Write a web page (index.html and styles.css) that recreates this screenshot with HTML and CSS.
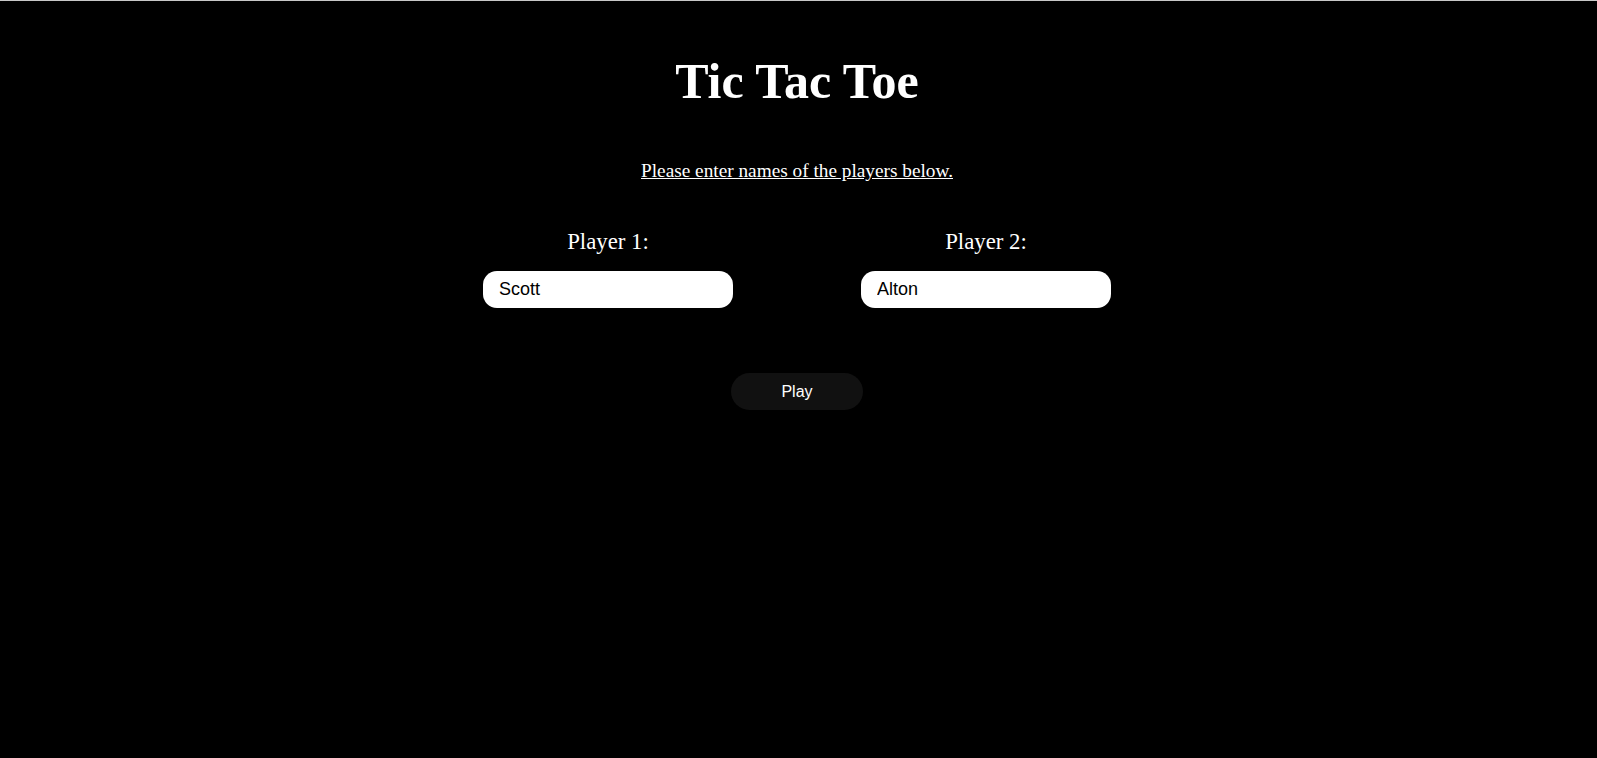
FILE: index.html
```html
<!DOCTYPE html>
<html>
<head>
<meta charset="utf-8">
<title>Tic Tac Toe</title>
<link rel="stylesheet" href="styles.css">
</head>
<body>
<div class="page">
  <h1 class="title">Tic Tac Toe</h1>
  <p class="intro">Please enter names of the players below.</p>
  <div class="players">
    <div class="player">
      <label class="player-label" for="p1">Player 1:</label>
      <input class="player-input" id="p1" type="text" value="Scott">
    </div>
    <div class="player">
      <label class="player-label" for="p2">Player 2:</label>
      <input class="player-input" id="p2" type="text" value="Alton">
    </div>
  </div>
  <div class="actions">
    <button class="play-btn" type="button">Play</button>
  </div>
</div>
</body>
</html>
```
FILE: styles.css
```css
html, body {
  margin: 0;
  padding: 0;
  background: #000;
  height: 100%;
}
body {
  border-top: 1px solid #c8c8c8;
  box-sizing: border-box;
  font-family: "Liberation Serif", "Times New Roman", serif;
  color: #fff;
}
.page {
  display: flex;
  flex-direction: column;
  align-items: center;
  padding-right: 3px;
}
.title {
  margin: 51px 0 0;
  font-size: 50px;
  line-height: 58px;
  font-weight: bold;
}
.intro {
  margin: 50px 0 0;
  font-size: 19.3px;
  line-height: 22px;
  text-decoration: underline;
}
.players {
  display: flex;
  gap: 128px;
  margin-top: 47px;
}
.player {
  width: 250px;
  display: flex;
  flex-direction: column;
  align-items: center;
  gap: 17px;
}
.player-label {
  font-size: 22.8px;
  line-height: 25px;
}
.player-input {
  width: 100%;
  height: 37px;
  box-sizing: border-box;
  border: none;
  border-radius: 14px;
  background: #fff;
  padding: 0 16px;
  font-family: "Liberation Sans", Arial, sans-serif;
  font-size: 18px;
  color: #000;
  outline: none;
}
.actions {
  margin-top: 65px;
}
.play-btn {
  width: 132px;
  height: 37px;
  border: none;
  border-radius: 19px;
  background: #111;
  color: #fff;
  font-family: "Liberation Sans", Arial, sans-serif;
  font-size: 16px;
  cursor: pointer;
}
```
